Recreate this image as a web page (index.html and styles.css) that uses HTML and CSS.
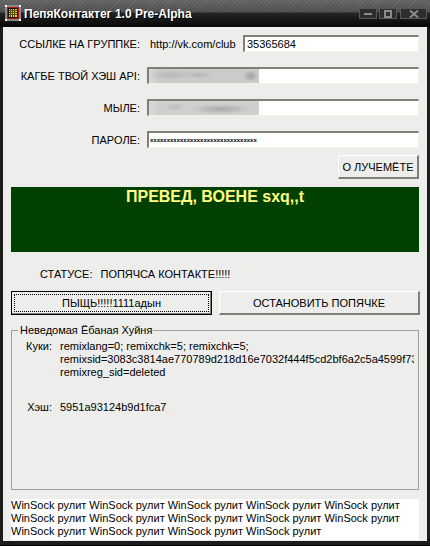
FILE: index.html
```html
<!DOCTYPE html>
<html lang="en">
<head>
    <meta charset="UTF-8">
    <meta name="viewport" content="width=device-width, initial-scale=1.0">
    <title>ПепяКонтактег 1.0 Pre-Alpha</title>
    <link rel="stylesheet" href="styles.css">
</head>
<body>
    <div class="window">
        <div class="titlebar">
            <svg class="app-icon" width="16" height="16" viewBox="0 0 16 16">
                <rect width="16" height="16" fill="#fff"/>
                <path d="M3 0v3M5 0v3M7 0v3M9 0v3M11 0v3M13 0v3M3 13v3M5 13v3M7 13v3M9 13v3M11 13v3M13 13v3M0 3h3M0 5h3M0 7h3M0 9h3M0 11h3M0 13h3M13 3h3M13 5h3M13 7h3M13 9h3M13 11h3M13 13h3" stroke="#111" stroke-width="1"/>
                <rect x="2" y="2" width="12" height="12" fill="#b01818"/>
                <rect x="3" y="3" width="10" height="10" fill="#111"/>
                <rect x="4" y="4" width="8" height="8" fill="#e8d020"/>
                <path d="M5.5 4v8M7.5 4v8M9.5 4v8M4 5.5h8M4 7.5h8M4 9.5h8" stroke="#5e5208" stroke-width="1"/>
            </svg>
            <span class="title">ПепяКонтактег 1.0 Pre-Alpha</span>
            <div class="win-buttons">
                <div class="win-btn"><svg width="10" height="6" viewBox="0 0 10 6"><rect x="1" y="2" width="8" height="2" fill="#8c8c8c"/></svg></div>
                <div class="win-btn"><svg width="10" height="8" viewBox="0 0 10 8"><path d="M2 1h6v6h-6z" fill="none" stroke="#8c8c8c" stroke-width="2"/></svg></div>
                <div class="win-btn close"><svg width="12" height="8" viewBox="0 0 12 8"><path d="M2 0.5l8 7M10 0.5l-8 7" stroke="#8c8c8c" stroke-width="2"/></svg></div>
            </div>
        </div>

        <div class="client">
            <div class="form-row">
                <label class="lbl">ССЫЛКЕ НА ГРУППКЕ:</label>
                <div class="url-row">
                    <span class="url-prefix">http://vk.com/club</span>
                    <div class="field">35365684</div>
                </div>
            </div>
            <div class="form-row">
                <label class="lbl">КАГБЕ ТВОЙ ХЭШ API:</label>
                <div class="field"><div class="redacted"></div></div>
            </div>
            <div class="form-row">
                <label class="lbl">МЫЛЕ:</label>
                <div class="field"><div class="redacted second"></div></div>
            </div>
            <div class="form-row">
                <label class="lbl">ПАРОЛЕ:</label>
                <div class="field password">xxxxxxxxxxxxxxxxxxxxxxxxxxxxxxxx</div>
            </div>

            <div class="best-row">
                <button class="btn best">О ЛУЧЕМЁТЕ</button>
            </div>

            <div class="banner">ПРЕВЕД, ВОЕНЕ sxq,,t</div>

            <div class="status">
                <span>СТАТУСЕ:</span>
                <span>ПОПЯЧСА КОНТАКТЕ!!!!!</span>
            </div>

            <div class="actions">
                <button class="btn default"><span class="focus">ПЫЩЬ!!!!!1111адын</span></button>
                <button class="btn">ОСТАНОВИТЬ ПОПЯЧКЕ</button>
            </div>

            <fieldset class="group">
                <legend>Неведомая Ёбаная Хуйня</legend>
                <div class="info">
                    <span class="info-key">Куки:</span>
                    <div class="info-val">remixlang=0; remixchk=5; remixchk=5;<br>remixsid=3083c3814ae770789d218d16e7032f444f5cd2bf6a2c5a4599f730<br>remixreg_sid=deleted</div>
                </div>
                <div class="info hash">
                    <span class="info-key">Хэш:</span>
                    <div class="info-val">5951a93124b9d1fca7</div>
                </div>
            </fieldset>

            <div class="memo">WinSock рулит WinSock рулит WinSock рулит WinSock рулит WinSock рулит<br>WinSock рулит WinSock рулит WinSock рулит WinSock рулит WinSock рулит<br>WinSock рулит WinSock рулит WinSock рулит WinSock рулит</div>
        </div>
    </div>
</body>
</html>
```

FILE: styles.css
```css
* {
    margin: 0;
    padding: 0;
    box-sizing: border-box;
    font-family: "Liberation Sans", Arial, sans-serif;
}

body {
    background: #000;
    color: #000;
    font-size: 11px;
    overflow: hidden;
}

.window {
    width: 430px;
    height: 546px;
    padding: 0 3px 4px;
    background: #1c1c1c;
    border-bottom: 1px solid #000;
    display: flex;
    flex-direction: column;
}

.titlebar {
    height: 27px;
    flex: none;
    margin: 0 -3px;
    padding: 5px 3px 0 5px;
    display: flex;
    align-items: flex-start;
    gap: 3px;
    background:
        repeating-linear-gradient(135deg, rgba(255, 255, 255, 0.07) 0 1px, transparent 1px 3px) top / 100% 12px no-repeat,
        linear-gradient(#646464 0, #4c4c4c 12px, #262626 13px, #080808 26px);
}

.app-icon {
    flex: none;
}

.title {
    color: #fff;
    font-size: 12px;
    font-weight: bold;
    line-height: 19px;
    text-shadow: 1px 1px 0 #000;
}

.win-buttons {
    margin-left: auto;
    display: flex;
    gap: 2px;
    padding-top: 3px;
}

.win-btn {
    width: 18px;
    height: 11px;
    border: 1px solid #585858;
    background: #2e2e2e;
    display: flex;
    align-items: center;
    justify-content: center;
}

.win-btn.close {
    width: 27px;
    margin-left: 1px;
}

.client {
    flex: 1;
    background: #ededeb;
    padding: 8px 8px 1px;
    display: flex;
    flex-direction: column;
}

.form-row {
    display: grid;
    grid-template-columns: 129px 272px;
    column-gap: 7px;
    align-items: center;
    height: 17px;
    margin-bottom: 15px;
}

.lbl {
    text-align: right;
    white-space: nowrap;
}

.url-row {
    display: flex;
    align-items: center;
    justify-content: space-between;
    padding-left: 3px;
}

.url-prefix {
    white-space: nowrap;
    flex: none;
}

.url-row .field {
    width: 176px;
}

.field {
    height: 17px;
    background: #fff;
    border-top: 2px solid #7f7f78;
    border-left: 2px solid #7f7f78;
    border-right: 1px solid #f3f1e4;
    border-bottom: 1px solid #f3f1e4;
    line-height: 14px;
    padding-left: 2px;
    overflow: hidden;
    white-space: nowrap;
}

.password {
    font-size: 6px;
    font-weight: bold;
    padding-left: 1px;
}

/* smeared out text of the two hidden fields */
.redacted {
    width: 110px;
    height: 14px;
    margin-left: -2px;
    background:
        radial-gradient(ellipse 8px 6px at 102px 7px, #a0a0a0, transparent),
        radial-gradient(ellipse 14px 4px at 50px 6px, #b4b4b4, transparent),
        radial-gradient(ellipse 24px 5px at 22px 6px, #b8b8b8, transparent),
        linear-gradient(90deg, #dadada, #cbcbcb 8%);
}

.redacted.second {
    background:
        radial-gradient(ellipse 30px 5px at 72px 8px, #a8a8a8, transparent),
        radial-gradient(ellipse 10px 4px at 26px 6px, #bcbcbc, transparent),
        linear-gradient(90deg, #dadada, #cfcfcf 8%);
}

.best-row {
    display: flex;
    justify-content: flex-end;
    margin-top: -8px;
    margin-bottom: 8px;
}

.btn {
    height: 24px;
    background: #ededeb;
    font-size: 11px;
    color: #000;
    border-top: 1px solid #fff;
    border-left: 1px solid #fff;
    border-right: 2px solid #7f7f78;
    border-bottom: 2px solid #7f7f78;
}

.best {
    width: 81px;
}

.banner {
    height: 65px;
    background: #004000;
    color: #ffff80;
    font-size: 16px;
    font-weight: bold;
    text-align: center;
    line-height: 20px;
    flex: none;
}

.status {
    height: 39px;
    padding: 15px 0 0 29px;
    display: flex;
    gap: 8px;
    line-height: 14px;
}

.actions {
    display: grid;
    grid-template-columns: 201px 201px;
    column-gap: 7px;
}

.btn.default {
    border: 1px solid #000;
    box-shadow: inset -1px -1px 0 #7f7f78;
    padding: 2px;
}

.focus {
    display: block;
    height: 100%;
    line-height: 16px;
    border: 1px dotted #000;
}

.group {
    height: 167px;
    width: 408px;
    margin-top: 8px;
    border: 1px solid #a0a0a0;
    padding: 0 0 0 14px;
    overflow: hidden;
    flex: none;
}

.group legend {
    margin-left: -8px;
    padding: 0 1px 0 2px;
    line-height: 14px;
}

.info {
    display: flex;
    line-height: 13px;
    padding-top: 3px;
    white-space: nowrap;
}

.info.hash {
    margin-top: 19px;
}

.info-key {
    width: 26px;
    text-align: right;
    flex: none;
}

.info-val {
    margin-left: 8px;
    width: 354px;
    overflow: hidden;
}

.memo {
    margin-top: 9px;
    height: 41px;
    background: #fff;
    line-height: 13px;
    overflow: hidden;
    white-space: nowrap;
}
```
